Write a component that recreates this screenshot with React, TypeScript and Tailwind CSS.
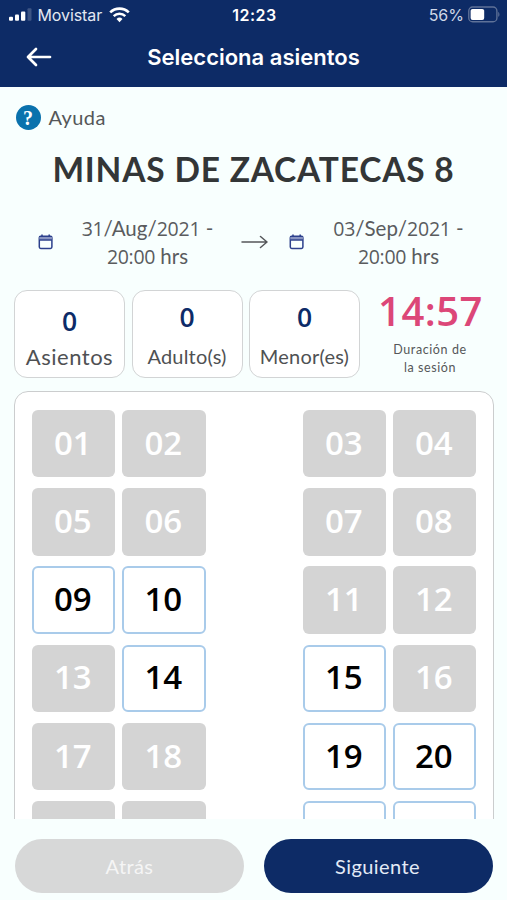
import React from "react";

const LATO = "font-['Lato','Liberation_Sans',sans-serif]";
const INTER = "font-['Inter','Liberation_Sans',sans-serif]";
const DIGITS = "font-['Open_Sans','Liberation_Sans',sans-serif]";

type Seat = { n: string; free?: boolean };

const rows: Seat[][] = [
  [{ n: "01" }, { n: "02" }, { n: "03" }, { n: "04" }],
  [{ n: "05" }, { n: "06" }, { n: "07" }, { n: "08" }],
  [{ n: "09", free: true }, { n: "10", free: true }, { n: "11" }, { n: "12" }],
  [{ n: "13" }, { n: "14", free: true }, { n: "15", free: true }, { n: "16" }],
  [{ n: "17" }, { n: "18" }, { n: "19", free: true }, { n: "20", free: true }],
  [{ n: "" }, { n: "" }, { n: "", free: true }, { n: "", free: true }],
];

function SeatBox({ seat }: { seat: Seat }) {
  return (
    <div
      className={
        "flex h-[67.5px] w-[83.5px] items-center justify-center rounded-[6px] pr-px pb-[3px] text-[33px] leading-none font-[650] " +
        DIGITS +
        (seat.free
          ? " border-[2px] border-[#a9cbea] bg-white text-black"
          : " bg-[#d4d4d4] text-white")
      }
    >
      {seat.n}
    </div>
  );
}

function CalendarIcon() {
  return (
    <svg width="16" height="16" viewBox="0 0 16 16" fill="none" className="shrink-0">
      <rect x="1.3" y="2.3" width="12.6" height="12.2" rx="1.4" stroke="#2c408c" strokeWidth="1.5" />
      <path d="M1.3 3h12.6v2.8H1.3z" fill="#8995c2" />
      <path d="M1.3 5.9h12.6M4 .5v2.2M11.2 .5v2.2" stroke="#2c408c" strokeWidth="1.5" />
    </svg>
  );
}

function DateText({ day, month, year }: { day: string; month: string; year: string }) {
  return (
    <div className="pt-px text-center text-[20.5px] leading-[26.7px] whitespace-nowrap text-[#5a5c5e]">
      <div>
        <span className={"text-[19.5px] tracking-[-0.2px] " + DIGITS}>{day}</span>/{month}/
        <span className={"text-[19.5px] tracking-[-0.2px] " + DIGITS}>{year}</span> -
      </div>
      <div>
        <span className={"text-[19.5px] tracking-[-0.3px] " + DIGITS}>20:00</span> hrs
      </div>
    </div>
  );
}

function Counter({ label, first }: { label: string; first?: boolean }) {
  return (
    <div className="flex h-[88px] w-[111px] flex-col items-center rounded-[13px] border-[1.5px] border-[#d2d4d5] bg-white">
      <div
        className={
          "text-[26.5px] leading-[30px] font-[650] text-[#0d2b68] " +
          DIGITS +
          (first ? " mt-[15px]" : " mt-[11px]")
        }
      >
        0
      </div>
      <div
        className={
          "leading-[26px] whitespace-nowrap text-[#4f5153] " +
          (first ? "mt-[8px] text-[22px] tracking-[0.5px]" : "mt-[11px] text-[20px] tracking-[0.2px]")
        }
      >
        {label}
      </div>
    </div>
  );
}

export default function App() {
  return (
    <div className={"flex h-[900px] w-[507px] flex-col overflow-hidden bg-[#f8fffe] " + LATO}>
      <header className={"h-[87px] shrink-0 bg-[#0d2b66] text-white " + INTER}>
        <div className="grid h-[29px] grid-cols-3 items-center pr-[7px] pl-[9px]">
          <div className="flex items-center text-[16px] text-[#e3e8f2]">
            <svg width="23" height="14" viewBox="0 0 23 14" fill="#fff">
              <rect x="0" y="8.7" width="4" height="4" rx="1" />
              <rect x="6" y="6.5" width="4" height="6.2" rx="1" />
              <rect x="12" y="3.5" width="4.3" height="9.2" rx="1" />
              <rect x="18.5" y="0.3" width="4" height="12.4" rx="1" opacity=".2" />
            </svg>
            <span className="ml-[5.5px] tracking-[-0.1px]">Movistar</span>
            <svg className="ml-[6.5px]" width="21" height="16" viewBox="0 0 21 16" fill="none" stroke="#fff">
              <path d="M1.2 5.4a13.4 13.4 0 0 1 18.6 0" strokeWidth="2.6" />
              <path d="M4.7 9.2a8.3 8.3 0 0 1 11.6 0" strokeWidth="2.5" />
              <path d="M7.5 11.9a4.4 4.4 0 0 1 6 0L10.5 15.2z" fill="#fff" stroke="none" />
            </svg>
          </div>
          <div className="text-center text-[16px] font-semibold tracking-[0.5px]">12:23</div>
          <div className="flex items-center justify-end text-[16px] text-[#d0d8e8]">
            <span>56%</span>
            <svg className="ml-[4px]" width="32" height="17" viewBox="0 0 33 17" fill="none">
              <rect x="0.8" y="0.8" width="29" height="15.2" rx="4" stroke="#5f7298" strokeWidth="1.4" />
              <rect x="2.7" y="2.7" width="14" height="11.4" rx="2" fill="#fff" />
              <path d="M31.2 5.8c1.6.6 1.6 4.4 0 5z" fill="#5f7298" />
            </svg>
          </div>
        </div>
        <div className="grid h-[57px] grid-cols-[60px_1fr_60px] items-center">
          <svg className="-mt-[2px] ml-[26px]" width="26" height="20" viewBox="0 0 26 20" fill="none" stroke="#fff" strokeWidth="2.7" strokeLinecap="round" strokeLinejoin="round">
            <path d="M24 10H2M10 2L2 10l8 8" />
          </svg>
          <h1 className="text-center text-[22px] font-semibold">Selecciona asientos</h1>
        </div>
      </header>

      <div className="mt-[17px] ml-[15.5px] flex h-[27px] shrink-0 items-center">
        <div className="flex h-[25px] w-[25px] items-center justify-center rounded-full bg-[#0a72ad] font-['Liberation_Serif',serif] text-[20px] leading-none font-bold text-white">
          ?
        </div>
        <span className="-mt-px ml-[8px] text-[20px] leading-[26px] tracking-[0.4px] text-[#555759]">Ayuda</span>
      </div>

      <h2 className="mt-[16px] h-[44px] shrink-0 text-center text-[33.5px] leading-[44px] font-bold tracking-[0.8px] whitespace-nowrap text-[#333637]">
        MINAS DE ZACATECAS 8
      </h2>

      <div className="mt-[24px] flex h-[54px] shrink-0 items-center">
        <div className="ml-[38px] w-[16px]"><CalendarIcon /></div>
        <div className="w-[187px]"><DateText day="31" month="Aug" year="2021" /></div>
        <svg width="28" height="16" viewBox="0 0 28 16" fill="none" stroke="#55575a" strokeWidth="1.5" strokeLinecap="round" strokeLinejoin="round">
          <path d="M1 8h25M19.5 2.5L26 8l-6.5 5.5" />
        </svg>
        <div className="ml-[20px] w-[16px]"><CalendarIcon /></div>
        <div className="w-[187px]"><DateText day="03" month="Sep" year="2021" /></div>
      </div>

      <div className="mt-[21px] ml-[14px] flex h-[88px] shrink-0 gap-[6.5px]">
        <Counter label="Asientos" first />
        <Counter label="Adulto(s)" />
        <Counter label="Menor(es)" />
        <div className="ml-[8px] flex w-[112px] flex-col items-center">
          <div className={"-mt-px text-[40px] leading-[44px] font-[650] tracking-[0.5px] text-[#dc4778] " + DIGITS}>14:57</div>
          <div className="mt-[8px] pr-px text-center text-[12.5px] leading-[18px] tracking-[0.6px] whitespace-nowrap text-[#555759]">
            Duración de
            <br />
            la sesión
          </div>
        </div>
      </div>

      <main className="mt-[13px] ml-[14px] h-[428px] w-[480px] shrink-0 overflow-hidden">
        <div className="flex h-[520px] flex-col gap-[10.8px] rounded-[14px] border-[1.5px] border-[#cbcdce] bg-white pt-[17.8px] pr-[17px] pl-[16.5px]">
          {rows.map((row, i) => (
            <div key={i} className="flex justify-between">
              <div className="flex gap-[7px]">
                <SeatBox seat={row[0]} />
                <SeatBox seat={row[1]} />
              </div>
              <div className="flex gap-[6.5px]">
                <SeatBox seat={row[2]} />
                <SeatBox seat={row[3]} />
              </div>
            </div>
          ))}
        </div>
      </main>

      <footer className="mt-[20px] ml-[15px] flex h-[54px] w-[478px] shrink-0 justify-between text-[20px] tracking-[0.4px]">
        <button className="w-[229px] rounded-full bg-[#d7d8d8] pb-px text-[#f5f5f5]">Atrás</button>
        <button className="w-[229px] rounded-full bg-[#0d2b66] pr-[9px] pb-px pl-[7px] text-[#e3eaf6]">Siguiente</button>
      </footer>
    </div>
  );
}
